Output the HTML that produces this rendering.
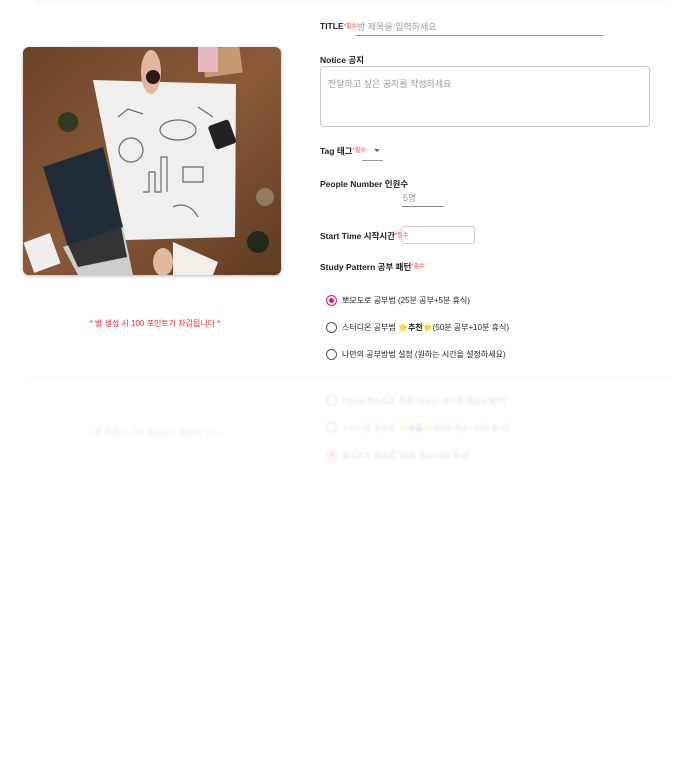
<!DOCTYPE html>
<html><head><meta charset="utf-8"><style>
*{margin:0;padding:0;box-sizing:border-box}
html,body{width:697px;height:758px;overflow:hidden}
body{background:#fff;position:relative;font-family:"Liberation Sans","Noto Sans CJK KR",sans-serif;color:#222}
.a{position:absolute;white-space:nowrap}
.lb{font-size:8.5px;font-weight:bold;color:#222}
.req{color:#f33;font-size:6px;vertical-align:top;font-weight:normal}
.ph{color:#999;font-size:9px}
.radio{position:absolute;width:11px;height:11px;border:1.5px solid #555;border-radius:50%}
.radio.on{border-color:#e8175d}
.radio.on:after{content:"";position:absolute;left:1.5px;top:1.5px;width:5px;height:5px;border-radius:50%;background:#e8175d}
.rt{font-size:8px;color:#222}
#refl{position:absolute;left:0;top:0;width:697px;height:380px;transform:translateY(375px) scaleY(-1);opacity:.15;filter:blur(1px);clip-path:inset(285px 0 0 0)}
</style></head><body>
<div class="a" style="left:35px;top:1px;width:630px;height:1px;background:#f0f0f0"></div>
<div class="a" style="left:30px;top:377px;width:640px;height:1px;background:#f4f4f4"></div>

<svg class="a" style="left:23px;top:47px;border-radius:6px;box-shadow:0 1px 3px rgba(0,0,0,.3)" width="258" height="228" viewBox="0 0 258 228">
<defs><linearGradient id="w" x1="0" y1="0" x2="1" y2="1"><stop offset="0" stop-color="#6b4328"/><stop offset=".5" stop-color="#8a5a38"/><stop offset="1" stop-color="#5e3a22"/></linearGradient></defs>
<rect width="258" height="228" fill="url(#w)"/>
<polygon points="70,33 213,37 212,190 102,193" fill="#efefed"/>
<g stroke="#333" stroke-width="1.2" fill="none" opacity=".7">
<ellipse cx="155" cy="83" rx="18" ry="10"/><circle cx="108" cy="103" r="12"/>
<path d="M120 145h6v-20h6v20h6v-35h6v35"/><path d="M160 120h20v15h-20z"/>
<path d="M95 70l10 -8 15 5M175 60l15 10M150 160c10-5 20 0 25 10"/>
</g>
<rect x="180" y="0" width="38" height="28" fill="#c49a70" transform="rotate(-8 200 14)"/>
<rect x="175" y="0" width="20" height="25" fill="#e7b9c3"/>
<ellipse cx="128" cy="25" rx="10" ry="22" fill="#e0b8a0"/><circle cx="130" cy="30" r="7" fill="#2a1a12"/>
<polygon points="20,120 80,100 100,180 45,200" fill="#202c38"/>
<polygon points="40,200 100,180 110,228 55,228" fill="#ccc"/>
<polygon points="45,198 98,180 104,210 55,220" fill="#333"/>
<rect x="188" y="75" width="22" height="25" rx="3" fill="#222" transform="rotate(-20 199 87)"/>
<circle cx="45" cy="75" r="10" fill="#2f3b25"/>
<circle cx="242" cy="150" r="9" fill="#9a8a70" opacity=".8"/>
<circle cx="235" cy="195" r="11" fill="#1f2a1c"/>
<rect x="5" y="190" width="28" height="32" fill="#eee" transform="rotate(-20 19 206)"/>
<ellipse cx="140" cy="215" rx="10" ry="14" fill="#e0b8a0"/>
<polygon points="150,195 195,215 190,228 150,228" fill="#f3efe8"/>
</svg>

<div class="a" style="left:0;width:310px;top:318px;text-align:center;color:#f22;font-size:8px">* 방 생성 시 100 포인트가 차감됩니다 *</div>

<div class="a lb" style="left:320px;top:21px">TITLE<span class="req">*필수</span></div>
<div class="a ph" style="left:357px;top:20px">방 제목을 입력하세요</div>
<div class="a" style="left:355px;top:35px;width:248px;height:1px;background:#999"></div>

<div class="a lb" style="left:320px;top:54px">Notice 공지</div>
<div class="a" style="left:320px;top:66px;width:330px;height:61px;border:1px solid #c8c8c8;border-radius:4px"></div>
<div class="a ph" style="left:328px;top:77px">전달하고 싶은 공지를 작성하세요</div>

<div class="a lb" style="left:320px;top:145px">Tag 태그<span class="req">*필수</span></div>
<div class="a" style="left:374px;top:149px;width:0;height:0;border-left:3px solid transparent;border-right:3px solid transparent;border-top:3px solid #666"></div>
<div class="a" style="left:362px;top:160px;width:21px;height:1px;background:#999"></div>

<div class="a lb" style="left:320px;top:178px">People Number 인원수</div>
<div class="a ph" style="left:403px;top:191px">5명</div>
<div class="a" style="left:402px;top:206px;width:42px;height:1px;background:#888"></div>

<div class="a lb" style="left:320px;top:230px">Start Time 시작시간<span class="req">*필수</span></div>
<div class="a" style="left:401px;top:226px;width:74px;height:18px;border:1px solid #ccc;border-radius:3px"></div>

<div class="a lb" style="left:320px;top:261px">Study Pattern 공부 패턴<span class="req">*필수</span></div>

<div class="radio on" style="left:326px;top:295px"></div>
<div class="a rt" style="left:342px;top:295px">뽀모도로 공부법 (25분 공부+5분 휴식)</div>
<div class="radio" style="left:326px;top:322px"></div>
<div class="a rt" style="left:342px;top:322px">스터디온 공부법 ⭐<b>추천</b>⭐(50분 공부+10분 휴식)</div>
<div class="radio" style="left:326px;top:349px"></div>
<div class="a rt" style="left:342px;top:349px">나만의 공부방법 설정 (원하는 시간을 설정하세요)</div>

<div id="refl">
<div class="a" style="left:0;width:310px;top:318px;text-align:center;color:#f22;font-size:8px">* 방 생성 시 100 포인트가 차감됩니다 *</div>
<div class="radio on" style="left:326px;top:295px"></div>
<div class="a rt" style="left:342px;top:295px">뽀모도로 공부법 (25분 공부+5분 휴식)</div>
<div class="radio" style="left:326px;top:322px"></div>
<div class="a rt" style="left:342px;top:322px">스터디온 공부법 ⭐<b>추천</b>⭐(50분 공부+10분 휴식)</div>
<div class="radio" style="left:326px;top:349px"></div>
<div class="a rt" style="left:342px;top:349px">나만의 공부방법 설정 (원하는 시간을 설정하세요)</div>
</div>
</body></html>
